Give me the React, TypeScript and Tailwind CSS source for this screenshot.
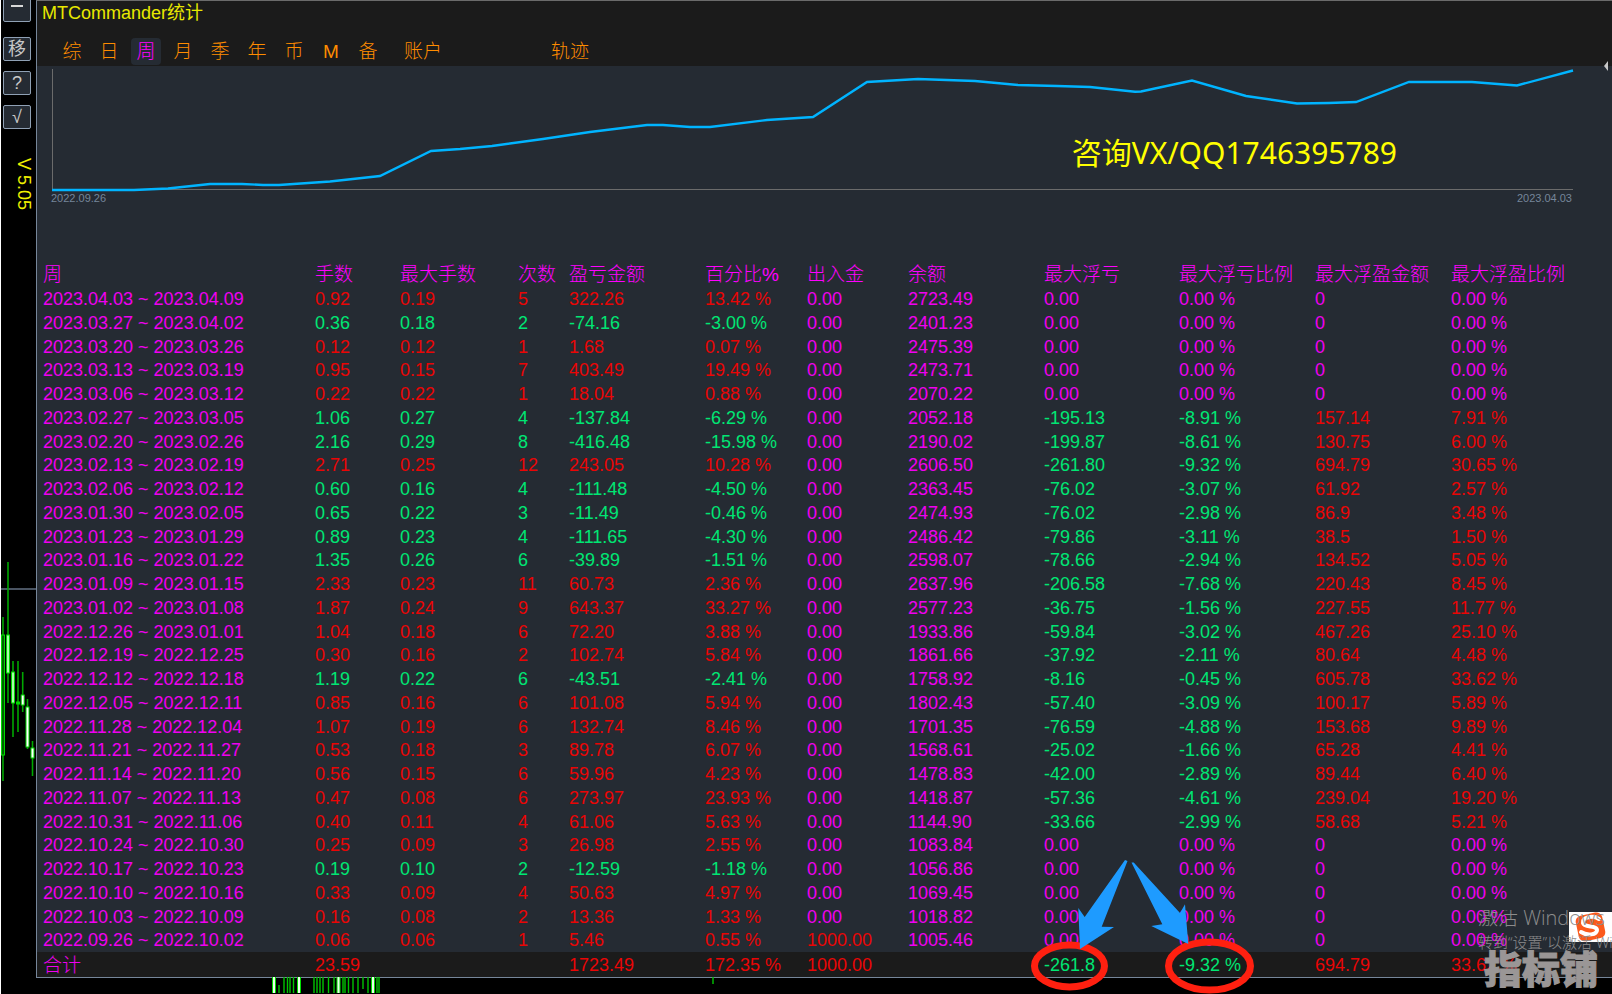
import clsx from "clsx";

const COLUMNS = [
  { title: "周", width: "w-[272px]" },
  { title: "手数", width: "w-[85px]" },
  { title: "最大手数", width: "w-[118px]" },
  { title: "次数", width: "w-[51px]" },
  { title: "盈亏金额", width: "w-[136px]" },
  { title: "百分比%", width: "w-[102px]" },
  { title: "出入金", width: "w-[101px]" },
  { title: "余额", width: "w-[136px]" },
  { title: "最大浮亏", width: "w-[135px]" },
  { title: "最大浮亏比例", width: "w-[136px]" },
  { title: "最大浮盈金额", width: "w-[136px]" },
  { title: "最大浮盈比例", width: "w-[167px]" },
];

const ROWS = [
  ["2023.04.03 ~ 2023.04.09", "0.92", "0.19", "5", "322.26", "13.42 %", "0.00", "2723.49", "0.00", "0.00 %", "0", "0.00 %"],
  ["2023.03.27 ~ 2023.04.02", "0.36", "0.18", "2", "-74.16", "-3.00 %", "0.00", "2401.23", "0.00", "0.00 %", "0", "0.00 %"],
  ["2023.03.20 ~ 2023.03.26", "0.12", "0.12", "1", "1.68", "0.07 %", "0.00", "2475.39", "0.00", "0.00 %", "0", "0.00 %"],
  ["2023.03.13 ~ 2023.03.19", "0.95", "0.15", "7", "403.49", "19.49 %", "0.00", "2473.71", "0.00", "0.00 %", "0", "0.00 %"],
  ["2023.03.06 ~ 2023.03.12", "0.22", "0.22", "1", "18.04", "0.88 %", "0.00", "2070.22", "0.00", "0.00 %", "0", "0.00 %"],
  ["2023.02.27 ~ 2023.03.05", "1.06", "0.27", "4", "-137.84", "-6.29 %", "0.00", "2052.18", "-195.13", "-8.91 %", "157.14", "7.91 %"],
  ["2023.02.20 ~ 2023.02.26", "2.16", "0.29", "8", "-416.48", "-15.98 %", "0.00", "2190.02", "-199.87", "-8.61 %", "130.75", "6.00 %"],
  ["2023.02.13 ~ 2023.02.19", "2.71", "0.25", "12", "243.05", "10.28 %", "0.00", "2606.50", "-261.80", "-9.32 %", "694.79", "30.65 %"],
  ["2023.02.06 ~ 2023.02.12", "0.60", "0.16", "4", "-111.48", "-4.50 %", "0.00", "2363.45", "-76.02", "-3.07 %", "61.92", "2.57 %"],
  ["2023.01.30 ~ 2023.02.05", "0.65", "0.22", "3", "-11.49", "-0.46 %", "0.00", "2474.93", "-76.02", "-2.98 %", "86.9", "3.48 %"],
  ["2023.01.23 ~ 2023.01.29", "0.89", "0.23", "4", "-111.65", "-4.30 %", "0.00", "2486.42", "-79.86", "-3.11 %", "38.5", "1.50 %"],
  ["2023.01.16 ~ 2023.01.22", "1.35", "0.26", "6", "-39.89", "-1.51 %", "0.00", "2598.07", "-78.66", "-2.94 %", "134.52", "5.05 %"],
  ["2023.01.09 ~ 2023.01.15", "2.33", "0.23", "11", "60.73", "2.36 %", "0.00", "2637.96", "-206.58", "-7.68 %", "220.43", "8.45 %"],
  ["2023.01.02 ~ 2023.01.08", "1.87", "0.24", "9", "643.37", "33.27 %", "0.00", "2577.23", "-36.75", "-1.56 %", "227.55", "11.77 %"],
  ["2022.12.26 ~ 2023.01.01", "1.04", "0.18", "6", "72.20", "3.88 %", "0.00", "1933.86", "-59.84", "-3.02 %", "467.26", "25.10 %"],
  ["2022.12.19 ~ 2022.12.25", "0.30", "0.16", "2", "102.74", "5.84 %", "0.00", "1861.66", "-37.92", "-2.11 %", "80.64", "4.48 %"],
  ["2022.12.12 ~ 2022.12.18", "1.19", "0.22", "6", "-43.51", "-2.41 %", "0.00", "1758.92", "-8.16", "-0.45 %", "605.78", "33.62 %"],
  ["2022.12.05 ~ 2022.12.11", "0.85", "0.16", "6", "101.08", "5.94 %", "0.00", "1802.43", "-57.40", "-3.09 %", "100.17", "5.89 %"],
  ["2022.11.28 ~ 2022.12.04", "1.07", "0.19", "6", "132.74", "8.46 %", "0.00", "1701.35", "-76.59", "-4.88 %", "153.68", "9.89 %"],
  ["2022.11.21 ~ 2022.11.27", "0.53", "0.18", "3", "89.78", "6.07 %", "0.00", "1568.61", "-25.02", "-1.66 %", "65.28", "4.41 %"],
  ["2022.11.14 ~ 2022.11.20", "0.56", "0.15", "6", "59.96", "4.23 %", "0.00", "1478.83", "-42.00", "-2.89 %", "89.44", "6.40 %"],
  ["2022.11.07 ~ 2022.11.13", "0.47", "0.08", "6", "273.97", "23.93 %", "0.00", "1418.87", "-57.36", "-4.61 %", "239.04", "19.20 %"],
  ["2022.10.31 ~ 2022.11.06", "0.40", "0.11", "4", "61.06", "5.63 %", "0.00", "1144.90", "-33.66", "-2.99 %", "58.68", "5.21 %"],
  ["2022.10.24 ~ 2022.10.30", "0.25", "0.09", "3", "26.98", "2.55 %", "0.00", "1083.84", "0.00", "0.00 %", "0", "0.00 %"],
  ["2022.10.17 ~ 2022.10.23", "0.19", "0.10", "2", "-12.59", "-1.18 %", "0.00", "1056.86", "0.00", "0.00 %", "0", "0.00 %"],
  ["2022.10.10 ~ 2022.10.16", "0.33", "0.09", "4", "50.63", "4.97 %", "0.00", "1069.45", "0.00", "0.00 %", "0", "0.00 %"],
  ["2022.10.03 ~ 2022.10.09", "0.16", "0.08", "2", "13.36", "1.33 %", "0.00", "1018.82", "0.00", "0.00 %", "0", "0.00 %"],
  ["2022.09.26 ~ 2022.10.02", "0.06", "0.06", "1", "5.46", "0.55 %", "1000.00", "1005.46", "0.00", "0.00 %", "0", "0.00 %"],
];

const TOTAL = ["合计", "23.59", "", "", "1723.49", "172.35 %", "1000.00", "", "-261.8", "-9.32 %", "694.79", "33.62 %"];

const TABS = ["综", "日", "周", "月", "季", "年", "币", "M", "备"];

function cellColor(row: string[], col: number) {
  // date and balance are neutral
  if (col === 0 || col === 7) return "text-[#f000f0]";
  // columns 1-5 follow the sign of the week's profit
  const value = parseFloat(col <= 5 ? row[4] : row[col]);
  if (value < 0) return "text-[#00e673]";
  if (value > 0) return "text-[#ea0505]";
  return "text-[#f000f0]";
}

function Candle({ x, high, low, top, bottom, fill }: { x: number; high: number; low: number; top: number; bottom: number; fill: string }) {
  return (
    <g>
      <path d={`M${x} ${high}V${low}`} stroke="#00a800" strokeWidth="1.6" />
      <rect x={x - 1.5} y={top} width="3" height={bottom - top} fill={fill} stroke="#00d800" />
    </g>
  );
}

function SideCandles() {
  return (
    <svg width="35" height="232" viewBox="0 0 35 232" className="block" aria-hidden="true">
      <path d="M0 35H35" stroke="#4a5462" strokeWidth="2" />
      <Candle x={2} high={63} low={227} top={81} bottom={201} fill="#006000" />
      <Candle x={7} high={8} low={149} top={81} bottom={119} fill="#a8ffa8" />
      <Candle x={12} high={107} low={183} top={118} bottom={149} fill="#a8ffa8" />
      <Candle x={17} high={107} low={178} top={148} bottom={150} fill="#00d800" />
      <Candle x={21.7} high={118} low={158} top={141} bottom={151} fill="#ffffff" />
      <Candle x={26.5} high={145} low={195} top={153} bottom={193} fill="#ffffff" />
      <Candle x={31.5} high={187} low={222} top={194} bottom={204} fill="#ffffff" />
    </svg>
  );
}

function BottomBars() {
  return (
    <svg width="500" height="16" viewBox="0 0 500 16" className="absolute top-full left-[198px]" aria-hidden="true">
      <path
        d="M44 8V16M49 0V16M52.500 0V16M55 0V16M58.500 0V16M79 0V16M82 0V16M85 0V16M88 0V16M93.500 0V16M99 0V16M108 0V16M110 0V16M113.500 0V16M118 0V16M123 0V16M128 0V12M133 0V16M142 0V16M144 0V16M478 0V7"
        stroke="#00c400"
        strokeWidth="1.4"
      />
      <path d="M39 0V16M64 0V16M103.500 0V16M138 0V16" stroke="#00e000" strokeWidth="4" />
      <path d="M39 0V16M64 0V16M103.500 0V16M138 0V16" stroke="#e8ffe8" strokeWidth="2" />
    </svg>
  );
}

function EquityChart() {
  return (
    <div className="relative h-[196px] pt-[3px] pr-[39px] pl-[15px]">
      <svg viewBox="52 69 1521 122" preserveAspectRatio="none" className="block h-[122px] w-full overflow-visible" role="img" aria-label="余额曲线">
        <path d="M52.500 69V190M52 189.500H1573" stroke="#6b6b6b" fill="none" />
        <path
          d="M52 190L134 190L168 188.500L210 184L242 184L263 185L279 185L330 181.500L380 176L431 151L460 149L492 146L543 139L590 132L647 125L663 125L690 127L710 127L767 120L813 117L867 82L918 79L975 81L1018 85L1057 86L1090 87L1135 91.700L1141 91.500L1192 80.500L1246 96L1297 103.500L1329 103L1356 102L1409 82L1472 82L1517 85.500L1573 70.500"
          fill="none"
          stroke="#00b4ff"
          strokeWidth="2.4"
        />
      </svg>
      <div className="-ml-px flex justify-between pr-px text-[11px] leading-[14px] text-[#75869a]">
        <span>2022.09.26</span>
        <span>2023.04.03</span>
      </div>
      <p className="absolute top-[67px] right-[215px] font-['Noto_Sans','Noto_Sans_CJK_SC',sans-serif] text-[30px] leading-10 text-[#ffff00]">
        咨询VX/QQ1746395789
      </p>
    </div>
  );
}

// Circle and arrow over the worst drawdown in the total row
function LossMark() {
  return (
    <>
      <svg width="80" height="50" viewBox="1030 941 80 50" className="absolute bottom-[-14px] left-[-8px]" aria-hidden="true">
        <ellipse cx="1069.500" cy="966" rx="35" ry="21" fill="none" stroke="#ff2010" strokeWidth="7" />
      </svg>
      <svg width="50" height="90" viewBox="1078 860 50 90" className="absolute bottom-[27px] left-[40px]" aria-hidden="true">
        <path d="M1125 860L1127.500 861L1101.700 926.700L1114 927L1080 949L1078.300 908L1084.700 917Z" fill="#1e9bff" />
      </svg>
    </>
  );
}

function RatioMark() {
  return (
    <>
      <svg width="90" height="56" viewBox="1164 939 90 56" className="absolute bottom-[-17px] left-[-9px]" aria-hidden="true">
        <ellipse cx="1209.500" cy="967" rx="41" ry="24" fill="none" stroke="#ff2010" strokeWidth="7" />
      </svg>
      <svg width="58" height="83" viewBox="1131 862 58 83" className="absolute bottom-[32px] left-[-42px]" aria-hidden="true">
        <path d="M1131.500 862.500L1133.700 862.500L1180 913L1185 904.300L1188.300 944L1151.300 926L1162.300 924.300Z" fill="#1e9bff" />
      </svg>
    </>
  );
}

function StatsTable() {
  return (
    <table className="w-full table-fixed border-collapse text-left text-[18px] leading-[23px] whitespace-nowrap">
      <thead>
        <tr className="h-[25px] text-[19px] text-[#ff00ff]">
          {COLUMNS.map((c) => (
            <th key={c.title} scope="col" className={clsx("py-0 pr-0 pl-1.5 font-light", c.width)}>
              {c.title}
            </th>
          ))}
        </tr>
      </thead>
      <tbody>
        {ROWS.map((row) => (
          <tr key={row[0]} className="h-6 [&:nth-child(4n)]:h-[23px]">
            {row.map((value, i) => (
              <td key={i} className={clsx("py-0 pr-0 pl-1.5", cellColor(row, i))}>
                {value}
              </td>
            ))}
          </tr>
        ))}
      </tbody>
      <tfoot>
        <tr className="h-[25px] bg-[#1b1b1b]">
          {TOTAL.map((value, i) => (
            <td key={i} className={clsx("relative pt-0.5 pr-0 pb-0 pl-1.5", cellColor(TOTAL, i), i === 0 && "text-[19px] font-light")}>
              {value}
              {i === 8 && <LossMark />}
              {i === 9 && <RatioMark />}
            </td>
          ))}
        </tr>
      </tfoot>
    </table>
  );
}

function Sidebar() {
  const button =
    "flex h-6 w-7 items-center justify-center rounded-xs border border-[#8fa0b4] bg-[#252b33] text-[18px] leading-none text-[#c8c8c8]";
  return (
    <aside className="flex w-[35px] shrink-0 flex-col">
      <div className="-mt-0.5 flex h-[131px] flex-col gap-[10px] pl-0.5">
        <button className={clsx(button, "mb-[5px]")} aria-label="最小化">
          <span className="mb-2 h-0.5 w-3 bg-[#d8d8d8]" />
        </button>
        <button className={button}>移</button>
        <button className={button}>?</button>
        <button className={button}>√</button>
      </div>
      <div className="mt-[29px] h-[396px] pl-[11px] text-[18px] leading-6 text-[#f0f000] [writing-mode:vertical-rl]">V 5.05</div>
      <SideCandles />
    </aside>
  );
}

function SogouLogo() {
  return (
    <svg width="43" height="30" viewBox="0 0 43 30" className="absolute top-0.5 right-0" aria-hidden="true">
      <rect width="43" height="30" fill="#fff" />
      <rect x="8" y="2" width="27" height="26" rx="6" fill="#fb5a1c" transform="rotate(-12 21 15)" />
      <path
        d="M30 7C24 3 13 5 14 11C15 16 28 13 28 18C28 23 18 24 12 20"
        fill="none"
        stroke="#fff"
        strokeWidth="4"
        strokeLinecap="round"
      />
    </svg>
  );
}

export default function App() {
  return (
    <div className="relative flex min-h-screen overflow-hidden border-l border-white bg-black font-['Liberation_Sans','Noto_Sans_CJK_SC',sans-serif]">
      <Sidebar />

      <main className="relative min-w-0 flex-1 self-start border-t border-b border-l border-t-[#6b6b6b] border-b-[#76869a] border-l-[#76869a] bg-[#252b33]">
        <header className="h-[65px] bg-[#1b1b1b]">
          <h1 className="pl-[5px] text-[18px] leading-6 text-[#e8e800]">MTCommander统计</h1>
          <nav className="flex gap-[7px] pt-[13px] pl-5 text-[19px] leading-[27px] font-light text-[#ff8c00]">
            {TABS.map((t) => (
              <button key={t} className={clsx("w-[30px] rounded-sm text-center", t === "周" && "bg-[#252b33] text-[#ff00ff]")}>
                {t}
              </button>
            ))}
            <button className="ml-3.5">账户</button>
            <button className="ml-[102px]">轨迹</button>
          </nav>
        </header>
        <span className="absolute top-[60px] right-1 h-0 w-0 border-y-5 border-r-4 border-y-transparent border-r-[#c8c8c8]" />

        <EquityChart />
        <StatsTable />
        <BottomBars />
      </main>

      <div className="absolute right-0 bottom-0 h-[84px] w-[134px] overflow-hidden font-['Open_Sans','Noto_Sans_CJK_SC',sans-serif] font-light whitespace-nowrap text-[#8c8c8c]">
        <SogouLogo />
        <p className="relative text-[20px] leading-4">激活 Windows</p>
        <p className="relative pt-2 text-[15px] leading-4">转到“设置”以激活 Windows。</p>
        <p className="relative pl-1.5 text-[38px] leading-9 font-black text-[#9a9696] [-webkit-text-stroke:1px_#9a9696]">指标铺</p>
      </div>
    </div>
  );
}
